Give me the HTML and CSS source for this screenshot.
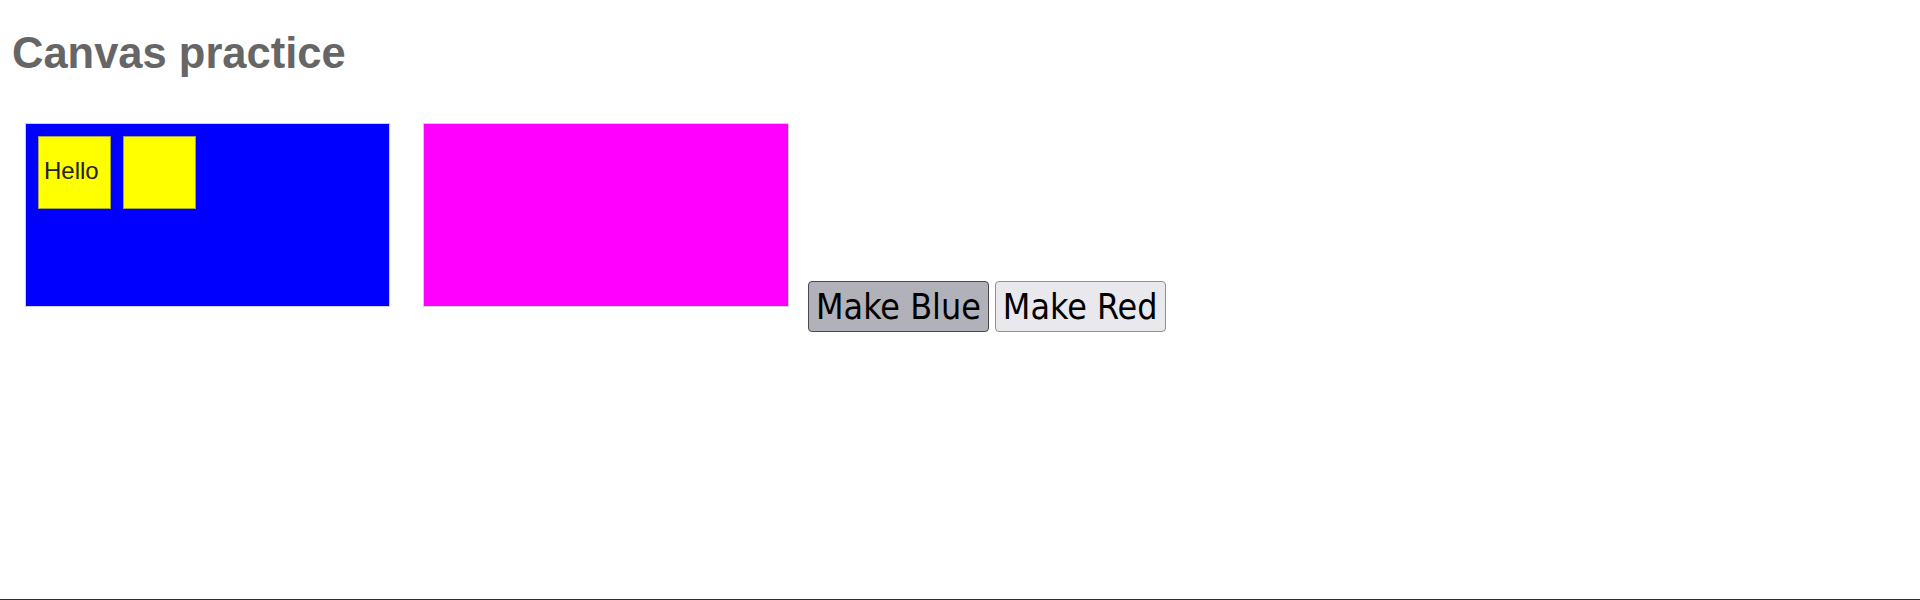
FILE: index.html
```html
<!DOCTYPE html>
<html lang="en">
<head>
<meta charset="utf-8">
<title>Canvas practice</title>
<link rel="stylesheet" href="styles.css">
</head>
<body>
<h1 class="title">Canvas practice</h1>
<div class="stage">
  <div class="canvas canvas-blue">
    <div class="square">Hello</div>
    <div class="square"></div>
  </div>
  <div class="canvas canvas-magenta"></div>
  <div class="buttons">
    <button class="btn btn-active" type="button">Make Blue</button>
    <button class="btn" type="button">Make Red</button>
  </div>
</div>
</body>
</html>
```

FILE: styles.css
```css
html, body {
  margin: 0;
  padding: 0;
}

body {
  min-height: 100vh;
  box-sizing: border-box;
  padding: 0 10px;
  border-bottom: 1px solid #2e2e2e;
  background: #ffffff;
  font-family: "Liberation Sans", Arial, sans-serif;
}

.title {
  margin: 29px 0 0;
  padding-left: 2px;
  font-family: "Liberation Sans", Arial, sans-serif;
  font-size: 43.5px;
  line-height: 49px;
  font-weight: bold;
  color: #666666;
}

.stage {
  display: flex;
  align-items: flex-end;
  gap: 3px;
  margin-top: 30px;
}

.canvas {
  box-sizing: border-box;
  width: 365px;
  height: 184px;
  margin: 15px 15px 25px;
  border: 1px solid #cfcfcf;
  flex: none;
}

.canvas-blue {
  background: #0000ff;
  display: flex;
  align-items: flex-start;
  gap: 12px;
  padding: 12px;
}

.canvas-magenta {
  width: 366px;
  background: #ff00ff;
}

.square {
  box-sizing: border-box;
  width: 73px;
  height: 73px;
  background: #ffff00;
  border: 1px solid #a3a34c;
  padding: 21px 0 0 5px;
  font-family: "Liberation Sans", Arial, sans-serif;
  font-size: 24px;
  line-height: 26px;
  color: #222222;
}

.buttons {
  display: flex;
  gap: 6px;
  margin-left: 1px;
}

.btn {
  font-family: "DejaVu Sans Condensed", "DejaVu Sans", sans-serif;
  font-stretch: condensed;
  font-size: 35.5px;
  line-height: 34px;
  padding: 8px 7px 7px;
  border: 1px solid #8f8f9d;
  border-radius: 4px;
  background: #e9e9ed;
  color: #000000;
}

.btn-active {
  background: #b1b1b9;
  border-color: #48484e;
}
```
